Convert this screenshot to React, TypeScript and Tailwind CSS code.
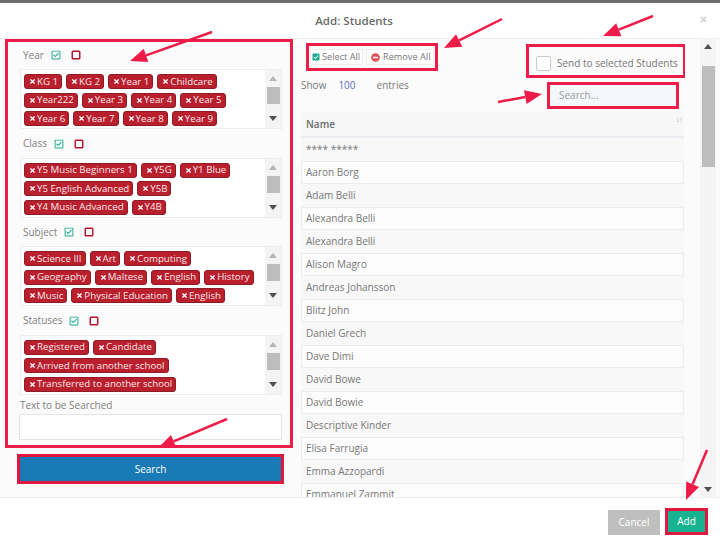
import { Square } from "lucide-react";
import { FaCheckSquare, FaMinusCircle, FaRegCheckSquare, FaTimes } from "react-icons/fa";

const FILTERS = [
  {
    label: "Year",
    rows: [
      ["KG 1", "KG 2", "Year 1", "Childcare"],
      ["Year222", "Year 3", "Year 4", "Year 5"],
      ["Year 6", "Year 7", "Year 8", "Year 9"],
    ],
  },
  {
    label: "Class",
    rows: [
      ["Y5 Music Beginners 1", "Y5G", "Y1 Blue"],
      ["Y5 English Advanced", "Y5B"],
      ["Y4 Music Advanced", "Y4B"],
    ],
  },
  {
    label: "Subject",
    rows: [
      ["Science III", "Art", "Computing"],
      ["Geography", "Maltese", "English", "History"],
      ["Music", "Physical Education", "English"],
    ],
  },
  {
    label: "Statuses",
    rows: [
      ["Registered", "Candidate"],
      ["Arrived from another school"],
      ["Transferred to another school"],
    ],
  },
];

const STUDENTS = [
  "**** *****",
  "Aaron Borg",
  "Adam Belli",
  "Alexandra Belli",
  "Alexandra Belli",
  "Alison Magro",
  "Andreas Johansson",
  "Blitz John",
  "Daniel Grech",
  "Dave Dimi",
  "David Bowe",
  "David Bowie",
  "Descriptive Kinder",
  "Elisa Farrugia",
  "Emma Azzopardi",
  "Emmanuel Zammit",
];

// tail x, tail y, tip x, tip y
const ARROWS = [
  [212, 32, 130, 61],
  [502, 19, 444, 48],
  [653, 16, 603, 36],
  [498, 102, 542, 94],
  [227, 419, 158, 448],
  [707, 450, 686, 500],
];

function Arrow({ a }: { a: number[] }) {
  const [x1, y1, x2, y2] = a;
  const len = Math.hypot(x2 - x1, y2 - y1);
  const ux = (x2 - x1) / len;
  const uy = (y2 - y1) / len;
  const bx = x2 - ux * 17;
  const by = y2 - uy * 17;
  const head = `${x2},${y2} ${bx - uy * 7},${by + ux * 7} ${bx + uy * 7},${by - ux * 7}`;
  return (
    <g>
      <line x1={x1} y1={y1} x2={bx} y2={by} stroke="#ee1c48" strokeWidth="2.5" />
      <polygon points={head} fill="#ee1c48" />
    </g>
  );
}

function ScrollBar() {
  return (
    <div className="flex w-4 shrink-0 flex-col items-center bg-[#f4f4f4] pb-[7px] pt-[6px]">
      <div className="h-0 w-0 border-x-4 border-b-[5px] border-x-transparent border-b-[#b5b5b5]" />
      <div className="mt-[6px] h-[17px] w-[13px] bg-[#bdbdbd]" />
      <div className="mt-auto h-0 w-0 border-x-4 border-t-[5px] border-x-transparent border-t-[#505050]" />
    </div>
  );
}

function Chip({ text }: { text: string }) {
  return (
    <span className="flex h-[15px] items-center gap-px whitespace-nowrap rounded-[3px] border border-[#8e1b25] bg-[#b91f2d] pl-1 pr-[3px] text-[9.7px] leading-none text-[#f7e9ea]">
      <FaTimes className="h-[7px] w-[7px] shrink-0 text-white" />
      {text}
    </span>
  );
}

function FilterBlock({ label, rows }: { label: string; rows: string[][] }) {
  return (
    <div className="mb-[8.5px]">
      <div className="flex h-[20px] items-center pb-2 pl-[15px] text-[10px] text-[#7d7d7d]">
        <span>{label}</span>
        <FaRegCheckSquare className="ml-[7px] h-[10px] w-[10px] text-[#19a98c]" />
        <Square className="ml-[10px] h-[10px] w-[10px] text-[#b3122c]" strokeWidth={3.5} />
      </div>
      <div className="ml-[12px] mr-[8px] flex h-[60px] border border-[#eeeeee] bg-white">
        <div className="flex flex-1 flex-col gap-[3.5px] pl-[3px] pt-1">
          {rows.map((row, i) => (
            <div key={i} className="flex gap-1">
              {row.map((t, j) => (
                <Chip key={j} text={t} />
              ))}
            </div>
          ))}
        </div>
        <ScrollBar />
      </div>
    </div>
  );
}

export default function App() {
  return (
    <div
      className="relative h-[547px] w-[720px] overflow-hidden bg-white"
      style={{ fontFamily: '"Open Sans", sans-serif' }}
    >
      <div className="h-[3px] bg-[#6e6e6e]" />

      <div className="flex h-[36px] items-center justify-center border-b border-[#eeeeee] pr-[12px] text-[11.5px] font-semibold text-[#6a6a6a]">
        Add: Students
        <FaTimes className="absolute right-[12px] top-[15px] h-[9px] w-[9px] text-[#d5d5d5]" />
      </div>

      <div className="flex h-[458px] bg-[#fbfbfb]">
        <div className="ml-[5px] w-[288px] shrink-0">
          <div className="h-[409px] border-[3px] border-[#ee1c48] pt-[7px]">
            {FILTERS.map((f) => (
              <FilterBlock key={f.label} label={f.label} rows={f.rows} />
            ))}
            <div className="-mt-[5px] pl-[12px] text-[10px] leading-[14px] text-[#7d7d7d]">Text to be Searched</div>
            <div className="ml-[11px] mr-[8px] mt-[2px] h-[26px] border border-[#e5e5e5] bg-white" />
          </div>
          <button className="ml-[12px] mt-[6px] h-[30px] w-[267px] border-[3px] border-[#e0183f] bg-[#1a7ab5] text-[10px] text-white">
            Search
          </button>
        </div>

        <div className="ml-[8px] w-[384px] shrink-0 overflow-hidden">
          <div className="flex h-[73px]">
            <div className="w-[137px] shrink-0 pt-[4px]">
              <div className="ml-[5px] flex h-[28px] w-[132px] items-center gap-[3px] border-[3px] border-[#ee1c48] pl-[1px] text-[9.2px] text-[#777777]">
                <span className="flex h-[16px] w-[53px] items-center gap-[2px] border border-[#eeeeee] bg-white pl-px">
                  <FaCheckSquare className="h-[8px] w-[8px] text-[#19a98c]" />
                  Select All
                </span>
                <span className="flex h-[16px] w-[68px] items-center gap-[3px] border border-[#eeeeee] bg-white pl-1">
                  <FaMinusCircle className="h-[9px] w-[9px] text-[#e0505a]" />
                  Remove All
                </span>
              </div>
              <div className="mt-[7px] flex h-[14px] items-center text-[10px] text-[#777777]">
                <span>Show</span>
                <span className="ml-[12px] text-[#5c6bc0]">100</span>
                <span className="ml-[21px]">entries</span>
              </div>
            </div>
            <div className="ml-[88px] w-[160px] shrink-0 pt-[5px]">
              <div className="flex h-[34px] items-end gap-[6px] border-[3px] border-[#ee1c48] pb-[4px] pl-[7px] text-[10px] text-[#777777]">
                <span className="h-[15px] w-[15px] shrink-0 rounded-[2px] border border-[#c9c9c9] bg-white" />
                <span className="whitespace-nowrap">Send to selected Students</span>
              </div>
              <div className="ml-[21px] mt-[4px] flex h-[27px] w-[132px] items-center border-[3px] border-[#ee1c48] bg-[#f3f6fa] pl-[9px] text-[10px] text-[#9a9a9a]">
                Search...
              </div>
            </div>
          </div>

          <div className="mr-px flex h-[26px] items-center justify-between border-b-2 border-[#e9ecf0] bg-[#f7f7f7] pl-[5px] pr-[1px] text-[10px] font-semibold text-[#6b6b6b]">
            Name
            <span className="-mt-[8px] text-[7px] font-normal text-[#aaaaaa]">↓↑</span>
          </div>

          {STUDENTS.map((s, i) => (
            <div
              key={i}
              className={`mr-px flex h-[23px] items-center text-[10px] text-[#777777] ${
                i % 2 === 1 ? "border border-[#e9ecf0] bg-[#fcfcfc] pl-[4px]" : "bg-[#f8f8f8] pl-[5px]"
              }`}
            >
              {s}
            </div>
          ))}
        </div>

        <div className="ml-[15px] flex w-4 shrink-0 flex-col items-center bg-[#f4f4f4] py-[5px]">
          <div className="h-0 w-0 border-x-4 border-b-[5px] border-x-transparent border-b-[#505050]" />
          <div className="mt-[17px] h-[101px] w-[13px] bg-[#bdbdbd]" />
          <div className="mt-auto h-0 w-0 border-x-4 border-t-[5px] border-x-transparent border-t-[#505050]" />
        </div>
      </div>

      <div className="flex h-[50px] items-start justify-end border-t border-[#eeeeee] bg-white pr-[12px] pt-[10px]">
        <div className="flex items-end gap-[5px]">
          <button className="h-[25px] w-[52px] bg-[#bfbfbf] text-[10px] text-white">Cancel</button>
          <button className="h-[27px] w-[43px] border-[3px] border-[#e0183f] bg-[#17b391] text-[10px] text-white">
            Add
          </button>
        </div>
      </div>

      <svg className="pointer-events-none absolute left-0 top-0" width="720" height="547">
        {ARROWS.map((a, i) => (
          <Arrow key={i} a={a} />
        ))}
      </svg>
    </div>
  );
}
